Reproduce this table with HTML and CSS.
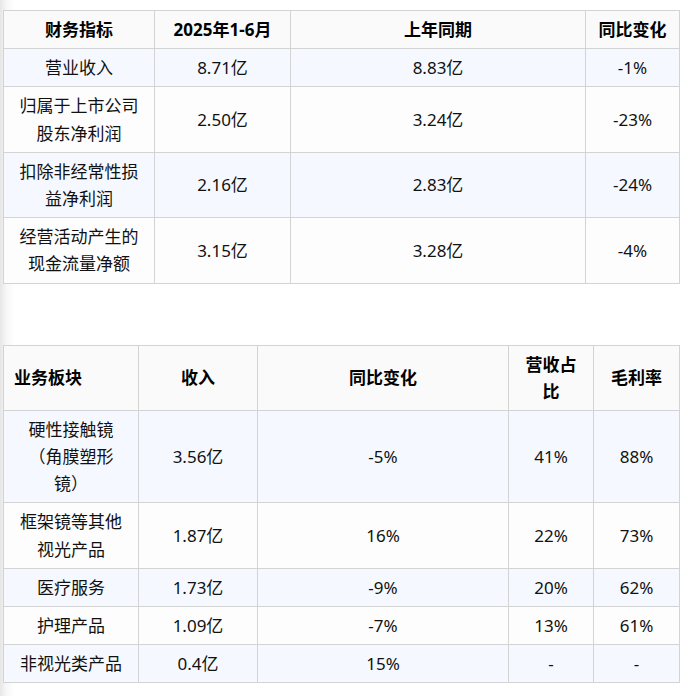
FILE: index.html
```html
<!DOCTYPE html>
<html lang="zh-CN">
<head>
<meta charset="utf-8">
<link rel="stylesheet" href="styles.css">
</head>
<body>
<div class="page">
  <table class="tbl t1">
    <colgroup>
      <col class="c1-1"><col class="c1-2"><col class="c1-3"><col class="c1-4">
    </colgroup>
    <thead>
      <tr><th>财务指标</th><th>2025年1-6月</th><th>上年同期</th><th>同比变化</th></tr>
    </thead>
    <tbody>
      <tr><td>营业收入</td><td>8.71亿</td><td>8.83亿</td><td>-1%</td></tr>
      <tr><td>归属于上市公司股东净利润</td><td>2.50亿</td><td>3.24亿</td><td>-23%</td></tr>
      <tr><td>扣除非经常性损益净利润</td><td>2.16亿</td><td>2.83亿</td><td>-24%</td></tr>
      <tr><td>经营活动产生的现金流量净额</td><td>3.15亿</td><td>3.28亿</td><td>-4%</td></tr>
    </tbody>
  </table>
  <table class="tbl t2">
    <colgroup>
      <col class="c2-1"><col class="c2-2"><col class="c2-3"><col class="c2-4"><col class="c2-5">
    </colgroup>
    <thead>
      <tr><th class="left">业务板块</th><th>收入</th><th>同比变化</th><th>营收占比</th><th>毛利率</th></tr>
    </thead>
    <tbody>
      <tr><td>硬性接触镜（角膜塑形镜）</td><td>3.56亿</td><td>-5%</td><td>41%</td><td>88%</td></tr>
      <tr><td>框架镜等其他视光产品</td><td>1.87亿</td><td>16%</td><td>22%</td><td>73%</td></tr>
      <tr><td>医疗服务</td><td>1.73亿</td><td>-9%</td><td>20%</td><td>62%</td></tr>
      <tr><td>护理产品</td><td>1.09亿</td><td>-7%</td><td>13%</td><td>61%</td></tr>
      <tr><td>非视光类产品</td><td>0.4亿</td><td>15%</td><td>-</td><td>-</td></tr>
    </tbody>
  </table>
</div>
</body>
</html>
```
FILE: styles.css
```css
html, body {
  margin: 0;
  padding: 0;
}
body {
  background: linear-gradient(to right, #e6e6e6 0, #f6f6f6 6px, #ffffff 14px);
  font-family: "Noto Sans", "Noto Sans CJK SC", sans-serif;
  color: #111;
}
.page {
  display: flex;
  flex-direction: column;
  gap: 61px;
  padding: 10px 0 0 3px;
  width: 676px;
}
.tbl {
  border-collapse: collapse;
  table-layout: fixed;
  width: 676px;
  font-size: 17px;
  line-height: 1.6;
  text-spacing-trim: space-all;
}
.tbl th, .tbl td {
  border: 1px solid #d3d3d3;
  padding: 5px 10px;
  text-align: center;
  vertical-align: middle;
  font-weight: 400;
}
.tbl th {
  font-weight: 700;
  background: #fafafa;
  color: #000;
}
.tbl th.left {
  text-align: left;
}
.tbl tbody tr:nth-child(odd) td {
  background: #f5f9ff;
}
.tbl tbody tr:nth-child(even) td {
  background: #fdfdfd;
}
.c1-1 { width: 151px; }
.c1-2 { width: 136px; }
.c1-3 { width: 295px; }
.c1-4 { width: 94px; }
.c2-1 { width: 135px; }
.c2-2 { width: 119px; }
.c2-3 { width: 251px; }
.c2-4 { width: 85px; }
.c2-5 { width: 86px; }
```
